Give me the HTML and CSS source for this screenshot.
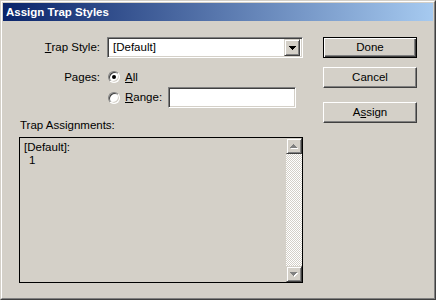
FILE: index.html
```html
<!DOCTYPE html>
<html>
<head>
<meta charset="utf-8">
<title>Assign Trap Styles</title>
<link rel="stylesheet" href="styles.css">
</head>
<body>
<div class="window">
  <div class="frame">
    <div class="titlebar"><span class="title">Assign Trap Styles</span></div>
    <div class="body">
      <div class="left">
        <div class="row row1">
          <span class="lbl"><u>T</u>rap Style:</span>
          <div class="combo">
            <span class="combo-text">[Default]</span>
            <span class="combo-btn">
              <svg width="7" height="4" viewBox="0 0 7 4" shape-rendering="crispEdges"><g fill="#000"><rect x="0" y="0" width="7" height="1"/><rect x="1" y="1" width="5" height="1"/><rect x="2" y="2" width="3" height="1"/><rect x="3" y="3" width="1" height="1"/></g></svg>
            </span>
          </div>
        </div>
        <div class="row row2">
          <span class="lbl">Pages:</span>
          <span class="radio checked"></span>
          <span class="rtext"><u>A</u>ll</span>
        </div>
        <div class="row row3">
          <span class="lbl"></span>
          <span class="radio"></span>
          <span class="rtext"><u>R</u>ange:</span>
          <div class="textbox"></div>
        </div>
        <div class="list-label">Trap Assignments:</div>
        <div class="list">
          <div class="list-content">
            <div class="line">[Default]:</div>
            <div class="line indent">1</div>
          </div>
          <div class="scrollbar">
            <div class="sbtn">
              <svg width="8" height="5" viewBox="0 0 8 5" shape-rendering="crispEdges"><g fill="#fff"><rect x="4" y="1" width="1" height="1"/><rect x="3" y="2" width="3" height="1"/><rect x="2" y="3" width="5" height="1"/><rect x="1" y="4" width="7" height="1"/></g><g fill="#808080"><rect x="3" y="0" width="1" height="1"/><rect x="2" y="1" width="3" height="1"/><rect x="1" y="2" width="5" height="1"/><rect x="0" y="3" width="7" height="1"/></g></svg>
            </div>
            <div class="track"></div>
            <div class="sbtn">
              <svg width="8" height="5" viewBox="0 0 8 5" shape-rendering="crispEdges"><g fill="#fff"><rect x="1" y="1" width="7" height="1"/><rect x="2" y="2" width="5" height="1"/><rect x="3" y="3" width="3" height="1"/><rect x="4" y="4" width="1" height="1"/></g><g fill="#808080"><rect x="0" y="0" width="7" height="1"/><rect x="1" y="1" width="5" height="1"/><rect x="2" y="2" width="3" height="1"/><rect x="3" y="3" width="1" height="1"/></g></svg>
            </div>
          </div>
        </div>
      </div>
      <div class="buttons">
        <div class="btn default">Done</div>
        <div class="btn cancel">Cancel</div>
        <div class="btn assign">A<u>s</u>sign</div>
      </div>
    </div>
  </div>
</div>
</body>
</html>
```
FILE: styles.css
```css
html, body {
  margin: 0;
  padding: 0;
  background: #d4d0c8;
}
body {
  font-family: "Liberation Sans", Arial, sans-serif;
  font-size: 11.5px;
  line-height: 13px;
  color: #000;
}
u { text-decoration: underline; text-underline-offset: 1px; }

.window {
  width: 436px;
  height: 300px;
  box-sizing: border-box;
  border: 1px solid;
  border-color: #d4d0c8 #404040 #404040 #d4d0c8;
}
.frame {
  height: 100%;
  box-sizing: border-box;
  border: 1px solid;
  border-color: #fff #808080 #808080 #fff;
  padding: 1px;
}
.titlebar {
  height: 18px;
  background: linear-gradient(to right, #0a246a, #a6caf0);
  color: #fff;
  font-weight: bold;
  display: flex;
  align-items: center;
  padding-left: 3px;
}
.title { padding-top: 1px; }

.body {
  display: flex;
  padding: 16px 0 0 16px;
}
.left { width: 284px; }

.row { display: flex; align-items: center; }
.row1 { height: 21px; }
.row2 { height: 12px; margin-top: 13px; }
.row3 { height: 21px; margin-top: 4px; }
.lbl {
  width: 81px;
  flex: none;
  text-align: right;
  margin-right: 7px;
}

.combo {
  width: 196px;
  height: 21px;
  box-sizing: border-box;
  border: 1px solid;
  border-color: #808080 #fff #fff #808080;
  box-shadow: inset 1px 1px 0 #404040, inset -1px -1px 0 #d4d0c8;
  background: #fff;
  display: flex;
  align-items: center;
  padding: 2px;
}
.combo-text { flex: 1; padding-left: 3px; }
.combo-btn {
  width: 16px;
  height: 17px;
  box-sizing: border-box;
  background: #d4d0c8;
  border: 1px solid;
  border-color: #d4d0c8 #404040 #404040 #d4d0c8;
  box-shadow: inset 1px 1px 0 #fff, inset -1px -1px 0 #808080;
  display: flex;
  align-items: center;
  justify-content: center;
}
.combo-btn svg { display: block; }

.radio {
  width: 12px;
  height: 12px;
  flex: none;
  box-sizing: border-box;
  border-radius: 50%;
  border: 1px solid;
  border-color: #808080 #fff #fff #808080;
  box-shadow: inset 1px 1px 0 #404040, inset -1px -1px 0 #d4d0c8;
  background: #fff;
  margin-left: 1px;
  position: relative;
}
.radio.checked::after {
  content: "";
  position: absolute;
  left: 3px;
  top: 3px;
  width: 4px;
  height: 4px;
  border-radius: 50%;
  background: #000;
}
.rtext { margin-left: 5px; }

.textbox {
  width: 128px;
  height: 21px;
  box-sizing: border-box;
  border: 1px solid;
  border-color: #808080 #fff #fff #808080;
  box-shadow: inset 1px 1px 0 #404040, inset -1px -1px 0 #d4d0c8;
  background: #fff;
  margin-left: 6px;
}

.list-label {
  margin-top: 11px;
  margin-left: 1px;
}
.list {
  margin-top: 5px;
  height: 146px;
  box-sizing: border-box;
  border: 1px solid #000;
  display: flex;
}
.list-content {
  flex: 1;
  padding: 3px 0 0 4px;
}
.line { height: 13px; }
.indent { padding-left: 5px; }

.scrollbar {
  width: 16px;
  display: flex;
  flex-direction: column;
}
.sbtn {
  height: 16px;
  box-sizing: border-box;
  background: #d4d0c8;
  border: 1px solid;
  border-color: #d4d0c8 #404040 #404040 #d4d0c8;
  box-shadow: inset 1px 1px 0 #fff, inset -1px -1px 0 #808080;
  display: flex;
  align-items: center;
  justify-content: center;
}
.sbtn svg { display: block; }
.track {
  flex: 1;
  background: conic-gradient(#fff 25%, #d4d0c8 0 50%, #fff 0 75%, #d4d0c8 0) 0 0 / 2px 2px;
}

.buttons {
  margin-left: 20px;
  display: flex;
  flex-direction: column;
  width: 94px;
}
.btn {
  height: 21px;
  box-sizing: border-box;
  border: 1px solid;
  border-color: #fff #404040 #404040 #fff;
  box-shadow: inset -1px -1px 0 #808080;
  display: flex;
  align-items: center;
  justify-content: center;
}
.btn.default {
  border-color: #000;
  box-shadow: inset 1px 1px 0 #fff, inset -1px -1px 0 #404040, inset -2px -2px 0 #808080;
}
.btn.cancel { margin-top: 9px; }
.btn.assign { margin-top: 14px; }
```
